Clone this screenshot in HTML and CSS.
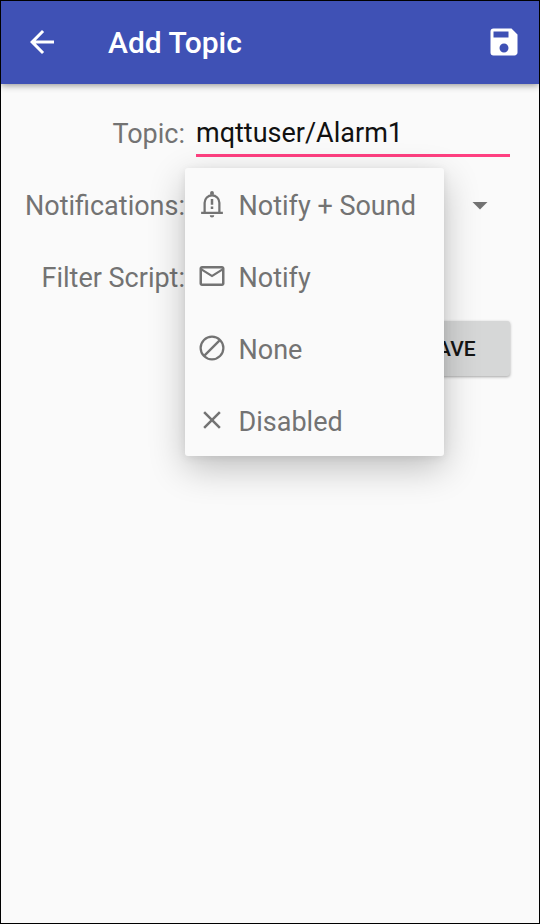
FILE: index.html
```html
<!DOCTYPE html>
<html lang="en">
<head>
<meta charset="utf-8">
<title>Add Topic</title>
<link rel="stylesheet" href="styles.css">
</head>
<body>
<div class="screen">
  <header class="toolbar">
    <svg class="toolbar-icon" viewBox="0 0 24 24"><path d="M20 11H7.83l5.59-5.59L12 4l-8 8 8 8 1.41-1.41L7.83 13H20v-2z"/></svg>
    <h1 class="title">Add Topic</h1>
    <svg class="toolbar-icon" viewBox="0 0 24 24"><path d="M17 3H5a2 2 0 0 0-2 2v14a2 2 0 0 0 2 2h14c1.1 0 2-.9 2-2V7l-4-4zm-5 16c-1.66 0-3-1.34-3-3s1.34-3 3-3 3 1.340 3 3-1.340 3-3 3zm3-10H5V5h10v4z"/></svg>
  </header>
  <main class="form">
    <div class="row">
      <label class="label">Topic:</label>
      <div class="input">mqttuser/Alarm1</div>
    </div>
    <div class="row">
      <label class="label">Notifications:</label>
      <div class="spinner">
        <svg class="caret" viewBox="0 0 24 24"><path d="M7 10l5 5 5-5z"/></svg>
        <ul class="menu">
          <li class="item">
            <svg class="icon" viewBox="0 0 24 24"><path class="line" d="M6.100 18.500V11a5.900 5.900 0 0 1 11.800 0v7.500M3.300 19h17.400"/><path d="M10.500 4.500V3a1.500 1.500 0 0 1 3 0v1.500zM10.200 21h3.600a1.800 1.800 0 0 1-3.600 0zM11 8h2v4.500h-2zM11 14h2v2h-2z"/></svg>
            <span>Notify + Sound</span>
          </li>
          <li class="item">
            <svg class="icon" viewBox="0 0 24 24"><path d="M20 4H4c-1.100 0-2 .9-2 2v12c0 1.100.9 2 2 2h16c1.100 0 2-.9 2-2V6c0-1.100-.9-2-2-2zm0 14H4V8l8 5 8-5v10zm-8-7L4 6h16l-8 5z"/></svg>
            <span>Notify</span>
          </li>
          <li class="item">
            <svg class="icon" viewBox="0 0 24 24"><circle class="line" cx="12" cy="12" r="9.100"/><path class="line" d="M5.500 18.500l13-13"/></svg>
            <span>None</span>
          </li>
          <li class="item">
            <svg class="icon" viewBox="0 0 24 24"><path d="M19 6.410L17.590 5 12 10.590 6.410 5 5 6.410 10.590 12 5 17.590 6.410 19 12 13.410 17.590 19 19 17.590 13.410 12z"/></svg>
            <span>Disabled</span>
          </li>
        </ul>
      </div>
    </div>
    <div class="row">
      <label class="label">Filter Script:</label>
    </div>
    <div class="actions"><button class="save">SAVE</button></div>
  </main>
</div>
</body>
</html>
```
FILE: styles.css
```css
* {
  box-sizing: border-box;
}

body {
  margin: 0;
  font-family: Roboto, sans-serif;
}

.screen {
  height: 924px;
  overflow: hidden;
  border: 1px solid #000;
  background: #fafafa;
}

.toolbar {
  display: flex;
  align-items: center;
  height: 83px;
  padding: 0 17px 2px 23px;
  background: #3f51b5;
  color: #fff;
  box-shadow: 0 1px 7px rgba(0, 0, 0, 0.45);
}

.toolbar-icon {
  width: 36px;
  height: 36px;
  fill: currentColor;
}

.title {
  flex: 1;
  margin: 2px 0 0 48px;
  font-size: 30px;
  font-weight: 500;
  line-height: 36px;
}

.form {
  padding: 13px 29px 0 0;
}

.row {
  display: flex;
  align-items: center;
  height: 72px;
  color: #737373;
  font-size: 27px;
}

.label {
  width: 184px;
  padding-top: 2px;
  text-align: right;
}

.input {
  flex: 1;
  height: 48px;
  margin: 0 0 0 11px;
  border-bottom: 3px solid #ff4081;
  color: #111;
  line-height: 49px;
}

.spinner {
  position: relative;
  display: flex;
  flex: 1;
  align-items: center;
  justify-content: flex-end;
  height: 72px;
  padding: 0 12px 1px 0;
}

.caret {
  width: 36px;
  height: 36px;
  fill: #737373;
}

.menu {
  position: absolute;
  top: -1px;
  left: -0.5px;
  width: 259.5px;
  margin: 0;
  padding: 0;
  border-radius: 3px;
  background: #fafafa;
  box-shadow: 0 12px 36px rgba(0, 0, 0, 0.24), 0 2px 8px rgba(0, 0, 0, 0.08);
  list-style: none;
}

.item {
  display: flex;
  align-items: center;
  gap: 12px;
  height: 72px;
  padding: 3px 0 0 12px;
  white-space: nowrap;
}

.icon {
  width: 30px;
  height: 30px;
  margin-top: -3px;
  fill: #737373;
}

.line {
  fill: none;
  stroke: #737373;
  stroke-width: 1.800;
}

.actions {
  display: flex;
  justify-content: flex-end;
  padding-top: 8px;
}

.save {
  width: 120px;
  height: 55px;
  padding: 0;
  border: 0;
  border-radius: 3px;
  background: #d6d7d7;
  box-shadow: 0 1px 3px rgba(0, 0, 0, 0.35);
  color: #151515;
  font: 500 21px Roboto, sans-serif;
}
```
